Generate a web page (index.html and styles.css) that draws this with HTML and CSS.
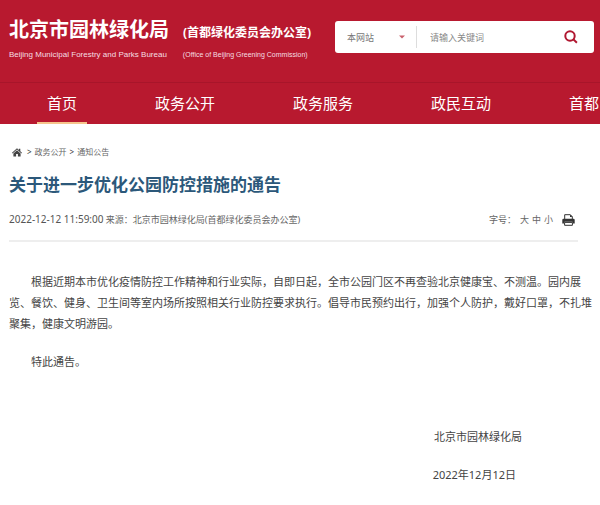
FILE: index.html
```html
<!DOCTYPE html>
<html lang="zh-CN">
<head>
<meta charset="utf-8">
<meta name="viewport" content="width=device-width, initial-scale=1">
<title>关于进一步优化公园防控措施的通告</title>
<link rel="stylesheet" href="styles.css">
</head>
<body>
<header class="site-header">
  <div class="masthead">
    <div class="brand">
      <div class="brand-row">
        <span class="brand-name">北京市园林绿化局</span>
        <span class="brand-office">(首都绿化委员会办公室)</span>
      </div>
      <div class="brand-row brand-row-en">
        <span class="brand-name-en">Beijing Municipal Forestry and Parks Bureau</span>
        <span class="brand-office-en">(Office of Beijing Greening Commission)</span>
      </div>
    </div>
    <form class="search">
      <div class="scope">
        <select class="scope-select" aria-label="搜索范围">
          <option>本网站</option>
        </select>
        <svg class="scope-caret" viewBox="0 0 6 4" aria-hidden="true"><path d="M0 0.5h6L3 3.600z"/></svg>
      </div>
      <input class="search-input" type="text" placeholder="请输入关键词" aria-label="请输入关键词">
      <button class="search-button" type="submit" aria-label="搜索">
        <svg class="search-icon" viewBox="0 0 14 14" aria-hidden="true"><circle cx="6" cy="6" r="4.700"/><path d="M9.300 9.300l3.600 3.400"/></svg>
      </button>
    </form>
  </div>
  <nav class="nav">
    <a class="nav-link nav-link-active" href="#">首页</a>
    <a class="nav-link" href="#">政务公开</a>
    <a class="nav-link" href="#">政务服务</a>
    <a class="nav-link" href="#">政民互动</a>
    <a class="nav-link" href="#">首都</a>
  </nav>
</header>
<main class="page">
  <nav class="crumbs">
    <a class="crumb-home" href="#" aria-label="首页">
      <svg class="home-icon" viewBox="0 0 10 9" aria-hidden="true"><path d="M5 0.3L6.900 2V0.800h1.400v2.400L10 4.700l-.6.700L5 1.600.6 5.400 0 4.700z"/><path d="M5 2.300L8.600 5.400V8.500H5.900V6H4.100v2.500H1.400V5.400z"/></svg>
    </a>
    <span class="crumb-sep">&gt;</span>
    <a class="crumb" href="#">政务公开</a>
    <span class="crumb-sep">&gt;</span>
    <a class="crumb" href="#">通知公告</a>
  </nav>
  <h1 class="title">关于进一步优化公园防控措施的通告</h1>
  <div class="meta">
    <p class="source"><time class="stamp">2022-12-12 11:59:00</time> 来源：北京市园林绿化局(首都绿化委员会办公室)</p>
    <div class="tools">
      <span class="tools-label">字号：</span>
      <button class="size" type="button">大</button>
      <button class="size" type="button">中</button>
      <button class="size" type="button">小</button>
      <button class="print" type="button" aria-label="打印">
        <svg class="print-icon" viewBox="0 0 13 12" aria-hidden="true"><path class="print-paper" d="M2.700 5.200V0.700h5.600l2 2v2.500"/><path d="M8 .6v2.400h2.400z"/><path d="M1.600 4.700h9.800q1.300 0 1.300 1.300v3.500h-2.200V7.800h-8v1.700H.3V6q0-1.300 1.300-1.300z"/><path class="print-paper" d="M2.600 8.400v2.900h7.800V8.400z"/></svg>
      </button>
    </div>
  </div>
  <article class="article">
    <p class="para">根据近期本市优化疫情防控工作精神和行业实际，自即日起，全市公园门区不再查验北京健康宝、不测温。园内展览、餐饮、健身、卫生间等室内场所按照相关行业防控要求执行。倡导市民预约出行，加强个人防护，戴好口罩，不扎堆聚集，健康文明游园。</p>
    <p class="para">特此通告。</p>
    <footer class="signature">
      <p class="signer">北京市园林绿化局</p>
      <p class="signed-on">2022年12月12日</p>
    </footer>
  </article>
</main>
</body>
</html>
```

FILE: styles.css
```css
* {
  box-sizing: border-box;
}

body {
  margin: 0;
  background: #fff;
  color: #444;
  font-family: "Noto Sans", "Noto Sans CJK SC", sans-serif;
  overflow-x: hidden;
}

p, h1 {
  margin: 0;
}

a {
  color: inherit;
  text-decoration: none;
}

button, input, select {
  margin: 0;
  padding: 0;
  border: 0;
  background: none;
  color: inherit;
  font: inherit;
}

.site-header {
  background: #b8192f;
  color: #fff;
}

.masthead {
  display: flex;
  justify-content: space-between;
  align-items: flex-start;
  height: 82px;
  padding: 16px 6px 0 9px;
}

.brand-row {
  display: flex;
  align-items: baseline;
  gap: 14px;
  white-space: nowrap;
  line-height: 28px;
}

.brand-name {
  font-size: 20px;
  font-weight: 700;
}

.brand-office {
  font-size: 12px;
  font-weight: 700;
}

.brand-row-en {
  gap: 16px;
  line-height: 16px;
  font-family: "Liberation Sans", sans-serif;
  color: #f6dfe2;
}

.brand-name-en {
  font-size: 8px;
}

.brand-office-en {
  font-size: 7px;
}

.search {
  display: flex;
  align-items: center;
  width: 259px;
  height: 32px;
  margin-top: 5px;
  border-radius: 3px;
  background: #fff;
  color: #777;
  font-size: 9px;
}

.scope {
  display: flex;
  align-items: center;
  width: 82px;
  height: 22px;
  padding: 0 11px 0 12px;
  border-right: 1px solid #ddd;
}

.scope-select {
  flex: 1;
  appearance: none;
}

.scope-caret {
  width: 6px;
  height: 4px;
  fill: #c9606c;
}

.search-input {
  flex: 1;
  min-width: 0;
  padding-left: 13px;
  outline: 0;
}

.search-input::placeholder {
  color: #888;
}

.search-button {
  display: flex;
  padding: 0 16px;
}

.search-icon {
  width: 14px;
  height: 14px;
  fill: none;
  stroke: #b01730;
  stroke-width: 2;
}

.nav {
  display: flex;
  gap: 58px;
  height: 42px;
  padding-left: 37px;
  border-top: 1px solid #a8152a;
  overflow: hidden;
}

.nav-link {
  flex: none;
  padding: 0 10px;
  border-bottom: 2px solid transparent;
  font-size: 15px;
  line-height: 41px;
}

.nav-link-active {
  border-color: #f6c58c;
}

.page {
  padding: 20px 6px 0 9px;
}

.crumbs {
  display: flex;
  align-items: center;
  gap: 3px;
  padding-left: 3px;
  font-size: 8px;
  line-height: 16px;
  color: #666;
}

.crumb-home {
  display: flex;
  margin-right: 2px;
}

.home-icon {
  width: 10px;
  height: 9px;
  fill: #444;
}

.crumb-sep {
  color: #333;
}

.title {
  margin-top: 11px;
  color: #2c587a;
  font-size: 17px;
  font-weight: 700;
  line-height: 28px;
}

.meta {
  display: flex;
  justify-content: space-between;
  align-items: center;
  margin-right: 16px;
  padding: 10px 0;
  border-bottom: 2px solid #eee;
  color: #666;
  font-size: 9px;
  line-height: 20px;
}

.stamp {
  color: #555;
  font-size: 10px;
}

.tools {
  display: flex;
  align-items: center;
  gap: 3px;
}

.tools-label {
  margin-right: 1px;
}

.print {
  display: flex;
  margin: 0 3px 0 6px;
}

.print-icon {
  width: 13px;
  height: 12px;
  fill: #333;
}

.print-paper {
  fill: #fff;
  stroke: #333;
  stroke-width: 1;
}

.article {
  padding-top: 29px;
  font-size: 11px;
  line-height: 21px;
  color: #444;
}

.para {
  margin-bottom: 17px;
  text-indent: 2em;
}

.signature {
  display: flex;
  flex-direction: column;
  align-items: flex-end;
  gap: 17px;
  margin-top: 54px;
  padding-right: 72px;
}

.signed-on {
  padding-right: 6px;
}
```
